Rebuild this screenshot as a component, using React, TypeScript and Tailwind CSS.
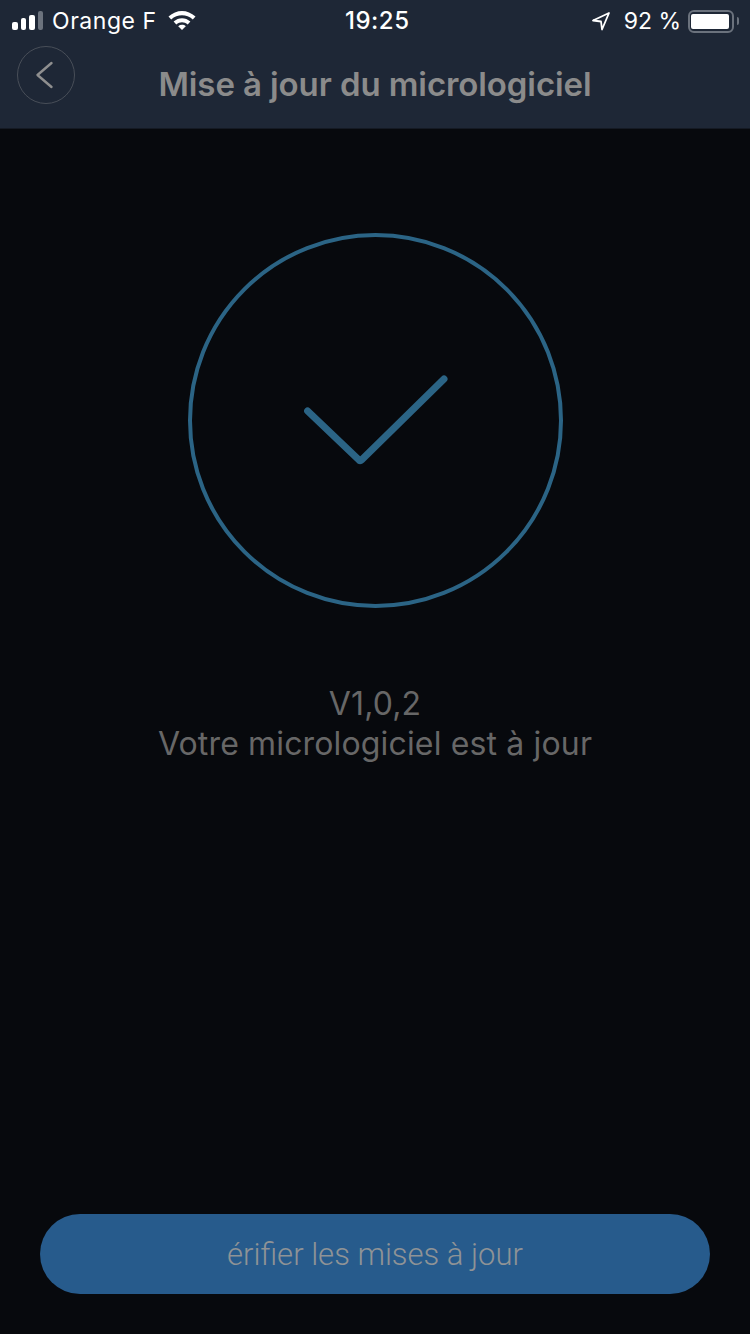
const StatusBar = () => {
  return <div className="h-10 flex items-center justify-between pl-3 pr-[11px] pt-[2px] text-white text-[23px] font-['Inter',sans-serif] relative">
    <div className="flex items-center">
      <div className="flex items-end gap-[3px] h-[20px] mr-[9px] mb-[2px]">
        <span className="w-[5.5px] h-[8px] bg-white rounded-[2px]" />
        <span className="w-[5.5px] h-[12px] bg-white rounded-[2px]" />
        <span className="w-[5.5px] h-[15px] bg-white rounded-[2px]" />
        <span className="w-[5.5px] h-[19px] bg-[#6b727d] rounded-[2px]" />
      </div>
      <span className="tracking-[0.55px]">Orange F</span>
      <svg width="28" height="22" viewBox="0 0 28 22" className="ml-[11px] mb-[3px]">
        <path d="M0.5 7.5C8.5 0 19.5 0 27.5 7.5L24.8 10.4C18.5 4.8 9.5 4.8 3.2 10.4Z" fill="#fff" />
        <path d="M5.6 12.6C10.6 8 17.4 8 22.4 12.6L19.7 15.4C16.2 12.4 11.8 12.4 8.3 15.4Z" fill="#fff" />
        <path d="M10.2 17.2C12.4 15.4 15.6 15.4 17.8 17.2L14 21Z" fill="#fff" />
      </svg>
    </div>
    <span className="absolute left-[345px] top-[7px] text-[24px] font-medium leading-7 tracking-[0.5px]">19:25</span>
    <div className="flex items-center">
      <svg width="20" height="20" viewBox="0 0 20 20" className="mr-[13px]" fill="none" stroke="#fff" strokeWidth="1.8" strokeLinejoin="round">
        <path d="M18 2L2 9.5L10 10.5L11 18.5Z" />
      </svg>
      <span>92 %</span>
      <div className="ml-[7px] w-[46px] h-[23px] border-[2px] border-[#6b727d] rounded-[6px] px-[1px] py-[2px] flex">
        <span className="block h-full w-[38px] bg-white rounded-[2px]" />
      </div>
      <span className="block w-[2px] h-[8px] bg-[#6b727d] rounded-r-sm ml-[3px]" />
    </div>
  </div>
}

const NavBar = () => {
  return <header className="h-[129px] bg-[#1e2736] border-b border-[#151a24] flex flex-col">
    <StatusBar />
    <div className="relative flex-1 flex items-center justify-center pt-[2px]">
      <button className="absolute left-[17px] top-[6px] w-[58px] h-[58px] rounded-full border border-[#484e58] flex items-center justify-center">
        <svg width="20" height="32" viewBox="0 0 20 32" fill="none" stroke="#8f8f8f" strokeWidth="2.4" strokeLinecap="round" strokeLinejoin="round" className="mr-[3px]">
          <path d="M16.5 4L2.5 16L16.5 28" />
        </svg>
      </button>
      <h1 className="text-[#8b8b8b] text-[33px] font-semibold font-['Inter',sans-serif] tracking-[-0.1px]">Mise à jour du micrologiciel</h1>
    </div>
  </header>
}

const App = () => {
  return <div className="w-[750px] h-[1334px] bg-[#07090d] flex flex-col overflow-hidden">
    <NavBar />
    <main className="flex-1 flex flex-col items-center pt-[104px]">
      <div className="w-[375px] h-[375px] rounded-full border-[4px] border-[#2b6485] flex items-center justify-center">
        <svg width="146" height="94" viewBox="0 0 146 94" fill="none" stroke="#2b6485" strokeWidth="7" strokeLinecap="round" strokeLinejoin="round" className="mt-[1px]">
          <path d="M5.6 37L57 86Q58 87.5 59.5 86L142 5" />
        </svg>
      </div>
      <div className="mt-[76px] text-center text-[#676767] text-[32px] leading-[40px] tracking-[0.15px] font-['Inter',sans-serif] font-normal">
        <p>V1,0,2</p>
        <p>Votre micrologiciel est à jour</p>
      </div>
    </main>
    <div className="px-10 pb-10">
      <button className="w-full h-20 pt-[3px] rounded-full bg-[#275b8c] text-[#8f9396] text-[31px] font-['Roboto',sans-serif] font-light">érifier les mises à jour</button>
    </div>
  </div>
}

export default App;
